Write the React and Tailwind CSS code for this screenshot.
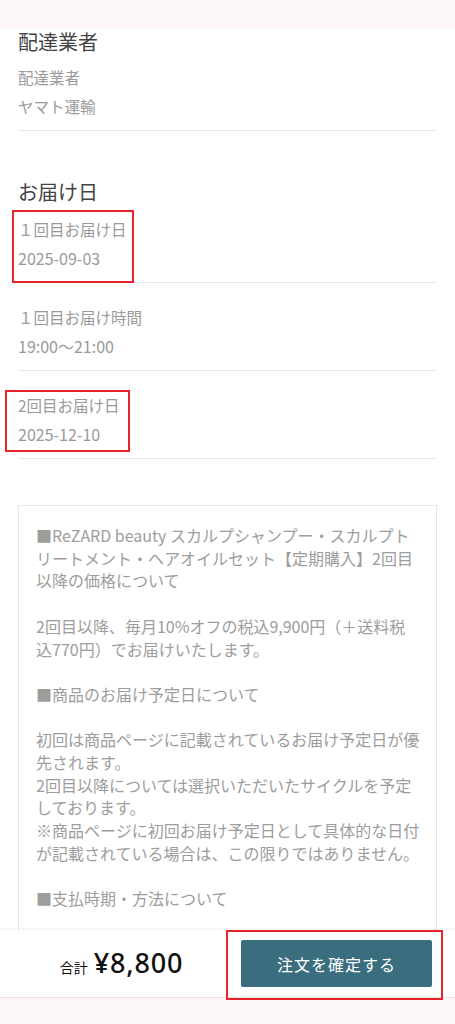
const font = { fontFamily: '"Noto Sans CJK JP", "Noto Sans", sans-serif' }

const Row = ({ label, value, first, children }) => (
  <div className={`relative border-b border-[#e4e9ea] pb-[14px] ${first ? 'pt-[15px]' : 'pt-[24px]'}`}>
    <p className="text-[15.5px] leading-[20px] text-[#9a9a9a]">{label}</p>
    <p className="mt-[9px] text-[16px] leading-[20px] text-[#9a9a9a]">{value}</p>
    {children}
  </div>
)

const Mark = ({ className }) => (
  <div className={`pointer-events-none absolute border-2 border-[#e8232b] ${className}`} />
)

const notice = [
  ['■ReZARD beauty スカルプシャンプー・スカルプト', 'リートメント・ヘアオイルセット【定期購入】2回目', '以降の価格について'],
  ['2回目以降、毎月10%オフの税込9,900円（＋送料税', '込770円）でお届けいたします。'],
  ['■商品のお届け予定日について'],
  [
    '初回は商品ページに記載されているお届け予定日が優',
    '先されます。',
    '2回目以降については選択いただいたサイクルを予定',
    'しております。',
    '※商品ページに初回お届け予定日として具体的な日付',
    'が記載されている場合は、この限りではありません。',
  ],
  ['■支払時期・方法について'],
  ['定期購入商品は、各回の商品発送時に決済が行われ', 'ます。お支払い方法は初回注文時と同じ方法となり', 'ます。'],
]

export default function App() {
  return (
    <div style={font} className="flex h-[1024px] w-[455px] flex-col overflow-hidden bg-white">
      {/* top band */}
      <div className="h-[29px] shrink-0 bg-[#fdf7fc]" />

      <div className="min-h-0 flex-1 overflow-hidden px-[18px]">
        {/* 配達業者 */}
        <section className="border-b border-[#e4e9ea] pb-[14px]">
          <h2 className="text-[20px] leading-[26px] text-[#444]">配達業者</h2>
          <p className="mt-[12px] text-[15.5px] leading-[20px] text-[#9a9a9a]">配達業者</p>
          <p className="mt-[9px] text-[15.5px] leading-[20px] text-[#9a9a9a]">ヤマト運輸</p>
        </section>

        {/* お届け日 */}
        <section className="mt-[49px]">
          <h2 className="text-[20px] leading-[24px] text-[#444]">お届け日</h2>
          <Row first label="１回目お届け日" value="2025-09-03">
            <Mark className="top-[6px] left-[-6px] h-[73px] w-[122px]" />
          </Row>
          <Row label="１回目お届け時間" value="19:00～21:00" />
          <Row label="2回目お届け日" value="2025-12-10">
            <Mark className="top-[19px] left-[-13px] h-[62px] w-[125px]" />
          </Row>
        </section>

        {/* notice box */}
        <div className="mt-[46px] border border-[#e6e6e6] pt-[18px] pr-[12px] pb-[20px] pl-[17px] text-[16px] leading-[22.7px] text-[#9d9d9d]">
          {notice.map((para, i) => (
            <div key={i} className={i > 0 ? 'mt-[22.7px]' : ''}>
              {para.map((line, j) => (
                <div key={j} className="whitespace-nowrap">{line}</div>
              ))}
            </div>
          ))}
        </div>
      </div>

      {/* footer */}
      <div className="relative z-10 flex h-[67px] shrink-0 items-center bg-white shadow-[0_-1px_3px_rgba(0,0,0,0.08)]">
        <div className="flex flex-1 items-baseline justify-center pl-[2px] text-[#111]">
          <span className="mr-[6px] text-[14px]">合計</span>
          <span className="text-[27px] font-medium leading-none tracking-[0.8px]" style={{ fontFamily: '"Noto Sans", sans-serif' }}>¥8,800</span>
        </div>
        <button className="mr-[23px] h-[47px] w-[191px] rounded-[2px] bg-[#3a6e7f] text-[16px] tracking-[1px] text-white">
          注文を確定する
        </button>
        <Mark className="top-0 left-[226px] h-[70px] w-[217px]" />
      </div>

      {/* bottom band */}
      <div className="h-[27px] shrink-0 border-t border-[#efe6d8] bg-[#fdf7fc]" />
    </div>
  )
}
